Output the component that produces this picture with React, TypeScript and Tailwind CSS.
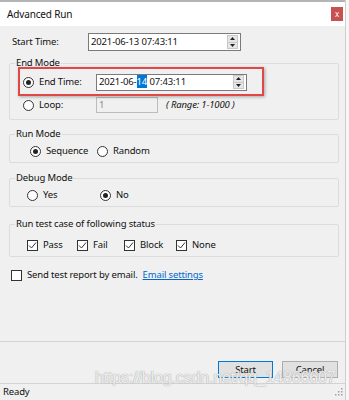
import React from "react";

const font = "font-['Noto_Sans','Open_Sans',sans-serif]";

function Radio({ checked, label, className = "" }: { checked?: boolean; label: string; className?: string }) {
  return (
    <div className={`flex items-center h-[14px] ${className}`}>
      <span className="w-[11px] h-[11px] rounded-full border border-[#333] bg-white flex items-center justify-center">
        {checked && <span className="w-[5px] h-[5px] rounded-full bg-[#222]" />}
      </span>
      <span className="ml-[5px]">{label}</span>
    </div>
  );
}

function Check({ label, checked = true, className = "" }: { label: string; checked?: boolean; className?: string }) {
  return (
    <div className={`flex items-center h-[14px] ${className}`}>
      <span className="w-[11px] h-[11px] border border-[#333] bg-white flex items-center justify-center">
        {checked && (
          <svg width="9" height="9" viewBox="0 0 9 9">
            <path d="M1 4.5 L3.5 7 L8 1.5" fill="none" stroke="#333" strokeWidth="1" />
          </svg>
        )}
      </span>
      <span className="ml-[5px]">{label}</span>
    </div>
  );
}

function Spin() {
  return (
    <div className="flex flex-col w-[11px] h-[14px] mr-[2px] border border-[#c8c8c8]">
      <div className="flex-1 bg-[#e6e6e6] flex items-center justify-center border-b border-[#c8c8c8]">
        <svg width="5" height="3" viewBox="0 0 5 3"><path d="M0 3 L2.5 0 L5 3 Z" fill="#222" /></svg>
      </div>
      <div className="flex-1 bg-[#e6e6e6] flex items-center justify-center">
        <svg width="5" height="3" viewBox="0 0 5 3"><path d="M0 0 L2.5 3 L5 0 Z" fill="#222" /></svg>
      </div>
    </div>
  );
}

function Group({ title, className = "", children }: { title: string; className?: string; children: React.ReactNode }) {
  return (
    <fieldset className={`border border-[#dcdcdc] rounded-[2px] ${className}`}>
      <legend className="ml-[5px] px-[1px] leading-[14px]">{title}</legend>
      {children}
    </fieldset>
  );
}

export default function App() {
  return (
    <div className={`relative w-[349px] h-[400px] bg-[#f0f0f0] text-[9.5px] tracking-[-0.15px] text-[#111] flex ${font}`}>
      <div className="w-[345px] flex flex-col border-t-2 border-[#b4b4b4]">
        {/* title bar */}
        <div className="h-[24px] bg-white flex items-center justify-between pl-[7px] pr-[2px]">
          <span className="text-[10px]">Advanced Run</span>
          <div className="w-[12px] h-[14px] bg-[#c75050] text-white text-[8px] flex items-center justify-center">x</div>
        </div>

        <div className="flex-1 px-[9px] flex flex-col">
          {/* start time */}
          <div className="mt-[7px] flex items-center h-[18px]">
            <span className="pl-[3px] w-[79px]">Start Time:</span>
            <div className="w-[153px] h-[18px] border border-[#7a7a7a] bg-white flex items-center justify-between">
              <span className="pl-[2px]">2021-06-13 07:43:11</span>
              <Spin />
            </div>
          </div>

          {/* end mode */}
          <Group title="End Mode" className="mt-[5px] pb-[6px] w-[330px]">
            <div className="relative mt-[3px] h-[18px] flex items-center">
              <div className="absolute left-[8px] w-[246px] -top-[6px] -bottom-[5px] border-2 border-[#e04848] shadow-[1px_1px_3px_rgba(0,0,0,0.3)]" />
              <Radio checked label="End Time:" className="ml-[13px] w-[73px]" />
              <div className="w-[151px] h-[17px] border border-[#7a7a7a] bg-white flex items-center justify-between">
                <span className="pl-[2px]">
                  2021-06-<span className="bg-[#0078d7] text-white">14</span> 07:43:11
                </span>
                <Spin />
              </div>
            </div>
            <div className="mt-[6px] h-[16px] flex items-center">
              <Radio label="Loop:" className="ml-[13px] w-[73px]" />
              <div className="w-[62px] h-[16px] border border-[#bcbcbc] bg-[#f0f0f0] flex items-center pl-[2px] text-[#8a8a8a]">1</div>
              <span className="ml-[8px] italic">( Range: 1-1000 )</span>
            </div>
          </Group>

          {/* run mode */}
          <Group title="Run Mode" className="mt-[7px] pb-[4px] w-[330px]">
            <div className="mt-[3px] flex items-center">
              <Radio checked label="Sequence" className="ml-[20px] w-[67px]" />
              <Radio label="Random" />
            </div>
          </Group>

          {/* debug mode */}
          <Group title="Debug Mode" className="mt-[8px] pb-[4px] w-[330px]">
            <div className="mt-[3px] flex items-center">
              <Radio label="Yes" className="ml-[17px] w-[73px]" />
              <Radio checked label="No" />
            </div>
          </Group>

          {/* status filter */}
          <Group title="Run test case of following status" className="mt-[10px] pb-[4px] w-[330px]">
            <div className="mt-[7px] flex items-center">
              <Check label="Pass" className="ml-[17px] w-[50px]" />
              <Check label="Fail" className="w-[47px]" />
              <Check label="Block" className="w-[52px]" />
              <Check label="None" />
            </div>
          </Group>

          <div className="mt-[11px] flex items-center">
            <Check label="Send test report by email." checked={false} className="ml-[2px]" />
            <span className="ml-[5px] text-[#0066cc] underline">Email settings</span>
          </div>
        </div>

        {/* buttons */}
        <div className="h-[42px] border-t border-[#d4d4d4] flex items-start justify-end pt-[19px] pr-[7px] gap-[9px]">
          <button className="w-[55px] h-[17px] bg-[#e1e1e1] border border-[#0078d7] leading-none">Start</button>
          <button className="w-[56px] h-[17px] bg-[#e1e1e1] border border-[#adadad] leading-none">Cancel</button>
        </div>

        {/* status bar */}
        <div className="h-[17px] border-t border-[#d4d4d4] flex items-center justify-between pl-[3px] pr-[2px]">
          <span>Ready</span>
          <svg width="8" height="8" viewBox="0 0 8 8">
            <rect x="6" y="0" width="1.5" height="1.5" fill="#a0a0a0" />
            <rect x="3" y="3" width="1.5" height="1.5" fill="#a0a0a0" />
            <rect x="6" y="3" width="1.5" height="1.5" fill="#a0a0a0" />
            <rect x="0" y="6" width="1.5" height="1.5" fill="#a0a0a0" />
            <rect x="3" y="6" width="1.5" height="1.5" fill="#a0a0a0" />
            <rect x="6" y="6" width="1.5" height="1.5" fill="#a0a0a0" />
          </svg>
        </div>
      </div>
      <div className="w-[4px] border-l border-[#cfcfcf] bg-[#f7f7f7]" />

      {/* watermark */}
      <div className="absolute left-[95px] top-[366px] text-[16px] text-white/80 font-['Liberation_Sans',sans-serif] [text-shadow:0_0_1px_#a8a8a8,0_0_1px_#a8a8a8] pointer-events-none">
        https://blog.csdn.net/qq_14866607
      </div>
    </div>
  );
}
